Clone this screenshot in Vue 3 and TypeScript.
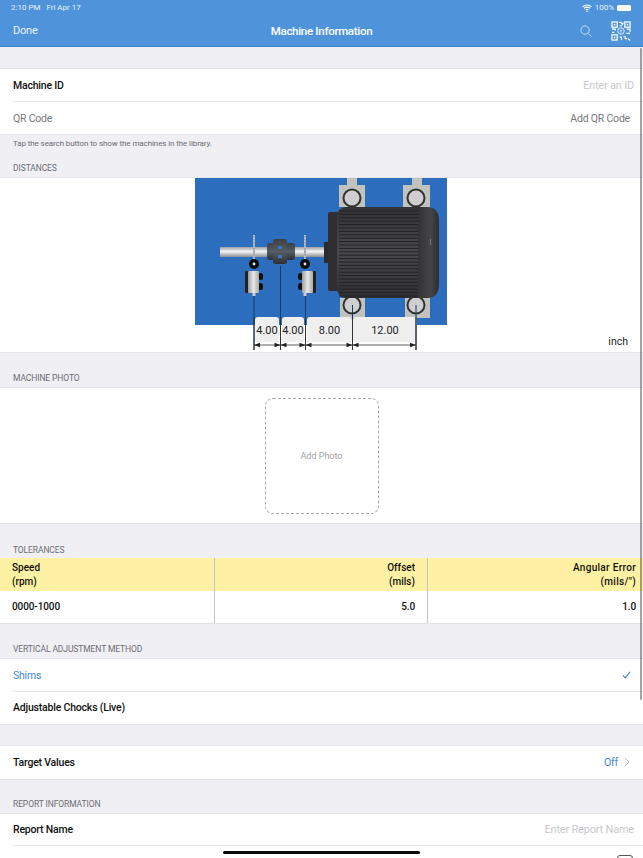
<script setup lang="ts">
const fins: number[] = []
for (let y = 211; y < 296; y += 3.4) fins.push(y)

const dims = [
  { x: 255, w: 24, label: '4.00' },
  { x: 282, w: 22, label: '4.00' },
  { x: 307, w: 45, label: '8.00' },
  { x: 353, w: 64, label: '12.00' },
]
const arrows = [
  [254, 280.5],
  [280.5, 305.5],
  [305.5, 352.5],
  [352.5, 416],
]
</script>

<template>
  <div class="screen">
    <header class="nav">
      <div class="status">
        <span>2:10 PM&nbsp;&nbsp; Fri Apr 17</span>
        <span class="status-right">
          <svg width="10" height="8" viewBox="0 0 10 8">
            <path d="M0.5 2.8a6.4 6.4 0 0 1 9 0M2 4.4a4.2 4.2 0 0 1 6 0M3.5 5.9a2 2 0 0 1 3 0" fill="none" stroke="#fff" stroke-width="1.1" />
            <circle cx="5" cy="7.1" r="0.8" fill="#fff" />
          </svg>
          <span>100%</span>
          <i class="battery"></i>
        </span>
      </div>
      <div class="bar">
        <span class="done">Done</span>
        <span class="title">Machine Information</span>
        <span class="actions">
          <svg width="12" height="12" viewBox="0 0 13 13">
            <circle cx="5.5" cy="5.5" r="4.5" fill="none" stroke="#dbe9f8" stroke-width="0.9" />
            <path d="M8.8 8.9l3.6 3.6" stroke="#dbe9f8" stroke-width="0.9" fill="none" />
          </svg>
          <svg width="20" height="20" viewBox="0 0 21 21" fill="none" stroke="#fff">
            <rect x="1" y="1" width="5.5" height="5.5" stroke-width="1.3" />
            <rect x="14.5" y="1" width="5.5" height="5.5" stroke-width="1.3" />
            <rect x="1" y="14.5" width="5.5" height="5.5" stroke-width="1.3" />
            <rect x="3" y="3" width="1.6" height="1.6" fill="#fff" stroke="none" />
            <rect x="16.5" y="3" width="1.6" height="1.6" fill="#fff" stroke="none" />
            <rect x="3" y="16.5" width="1.6" height="1.6" fill="#fff" stroke="none" />
            <path d="M8.5 1.5h1.8l1.6 2 1-2M9 5h2.5M1 8.5h3.5v1.5M1 12h2.5M16.5 8.5h3.5v3M16 13h4M9 17h2v3M13 16.5h2v2h2M18 18.5l2 2" stroke-width="1.2" />
            <circle cx="10.5" cy="10.5" r="3.4" stroke-width="0.9" />
            <path d="M9.3 9.3l1.2 1.4 1.2-1.4M10.5 10.7v1.7" stroke-width="0.8" />
          </svg>
        </span>
      </div>
    </header>

    <div class="g21"></div>
    <section class="group">
      <div class="row inset">
        <span class="label">Machine ID</span>
        <span class="placeholder">Enter an ID</span>
      </div>
      <div class="row qr">
        <span class="label muted">QR Code</span>
        <span class="value-muted pad-end">Add QR Code</span>
      </div>
    </section>
    <p class="hint">Tap the search button to show the machines in the library.</p>
    <h2 class="caption first">DISTANCES</h2>

    <section class="group diagram">
      <svg class="machine" width="252" height="174" viewBox="195 178 252 174">
        <defs>
          <linearGradient id="shaft" x1="0" x2="0" y1="0" y2="1">
            <stop offset="0" stop-color="#9a9fa3" />
            <stop offset="0.45" stop-color="#f4f4f4" />
            <stop offset="1" stop-color="#8b9195" />
          </linearGradient>
          <linearGradient id="block" x1="0" x2="1" y1="0" y2="0">
            <stop offset="0" stop-color="#9c9c9c" />
            <stop offset="0.5" stop-color="#e8e8e8" />
            <stop offset="1" stop-color="#a8a8a8" />
          </linearGradient>
          <linearGradient id="body" x1="0" x2="0" y1="0" y2="1">
            <stop offset="0" stop-color="#333335" />
            <stop offset="0.5" stop-color="#4a4a4c" />
            <stop offset="1" stop-color="#2f2f31" />
          </linearGradient>
          <linearGradient id="endcap" x1="0" x2="1" y1="0" y2="0">
            <stop offset="0" stop-color="#333335" />
            <stop offset="0.6" stop-color="#454547" />
            <stop offset="1" stop-color="#2e2e30" />
          </linearGradient>
          <linearGradient id="coupling" x1="0" x2="0" y1="0" y2="1">
            <stop offset="0" stop-color="#3b4046" />
            <stop offset="0.5" stop-color="#575d64" />
            <stop offset="1" stop-color="#2c3036" />
          </linearGradient>
        </defs>

        <rect x="195" y="178" width="252" height="147" fill="#2c6ebd" />

        <g fill="#c2c2bf">
          <rect x="347" y="178" width="10" height="8" />
          <rect x="412" y="178" width="10" height="8" />
          <rect x="339" y="185" width="26" height="22" />
          <rect x="403" y="185" width="27" height="22" />
          <rect x="340" y="298" width="25" height="20" />
          <rect x="405" y="298" width="25" height="20" />
        </g>
        <g fill="#cfcfcf" stroke="#333" stroke-width="2">
          <circle cx="352" cy="198" r="8.5" />
          <circle cx="416" cy="198" r="8.5" />
          <circle cx="352" cy="305" r="8.5" />
          <circle cx="416" cy="305" r="8.5" />
        </g>

        <rect x="220" y="247" width="105" height="10" fill="url(#shaft)" />
        <rect x="324" y="242" width="5" height="21" fill="#2b2b2d" />
        <rect x="328" y="212" width="12" height="79" rx="2" fill="#2f2f31" />
        <rect x="337" y="207" width="90" height="91" rx="9" fill="url(#body)" />
        <path d="M418 207H427q12 0 12 14V284q0 14-12 14H418z" fill="url(#endcap)" />
        <path v-for="y in fins" :key="y" :d="`M339 ${y}H418`" stroke="#222224" stroke-width="1" />
        <rect x="430" y="239" width="1" height="6" fill="#77777a" />

        <rect x="267" y="243" width="28" height="17" rx="3" fill="url(#coupling)" />
        <rect x="273" y="239" width="14" height="25" rx="2" fill="url(#coupling)" />
        <rect x="278" y="246" width="4" height="3" fill="#3a78c4" />
        <rect x="278" y="255" width="4" height="3" fill="#3a78c4" />

        <g>
          <path d="M254 235V259M305 235V259" stroke="#b7bdc2" stroke-width="2" />
          <path d="M254 236V258M305 236V258" stroke="#7f8a92" stroke-width="1" stroke-dasharray="1.5 1.5" />
          <circle cx="254" cy="264" r="5" fill="#0d0d0d" />
          <circle cx="305" cy="264" r="5" fill="#0d0d0d" />
          <circle cx="254" cy="264" r="1.4" fill="#e6e6e6" />
          <circle cx="305" cy="264" r="1.4" fill="#e6e6e6" />

          <rect x="258" y="273" width="5" height="7" rx="2.5" fill="#111" />
          <rect x="258" y="283" width="5" height="7" rx="2.5" fill="#111" />
          <rect x="245" y="271" width="4" height="22" rx="1" fill="#222" />
          <rect x="248" y="271" width="11" height="22" rx="1" fill="url(#block)" />
          <rect x="252.5" y="293" width="3" height="3" fill="#ccc" />

          <rect x="298" y="273" width="5" height="7" rx="2.5" fill="#111" />
          <rect x="298" y="283" width="5" height="7" rx="2.5" fill="#111" />
          <rect x="312" y="271" width="4" height="22" rx="1" fill="#222" />
          <rect x="302" y="271" width="11" height="22" rx="1" fill="url(#block)" />
          <rect x="303.5" y="293" width="3" height="3" fill="#ccc" />
        </g>

        <g v-for="d in dims" :key="d.x">
          <path :d="`M${d.x + 3} 317H${d.x + d.w - 3}q3 0 3 3V342H${d.x}V320q0-3 3-3z`" fill="#efefef" />
          <text :x="d.x + d.w / 2" y="334" text-anchor="middle" class="dim">{{ d.label }}</text>
        </g>

        <g stroke="#123c66" stroke-width="1" fill="none">
          <path d="M254 296V350M280.5 266V350M305.5 296V350M352.5 305V350M416 305V350" />
        </g>
        <path d="M254 317V350M280.5 317V350M305.5 317V350M352.5 317V350M416 317V350" stroke="#333" stroke-width="1" fill="none" />
        <g v-for="a in arrows" :key="a[0]">
          <path :d="`M${a[0]} 345H${a[1]}`" stroke="#333" stroke-width="0.8" />
          <path :d="`M${a[0]} 345l6-2.2v4.4zM${a[1]} 345l-6-2.2v4.4z`" fill="#222" />
        </g>
      </svg>
      <span class="unit">inch</span>
    </section>

    <h2 class="caption photo-cap">MACHINE PHOTO</h2>
    <section class="group photo">
      <div class="add-photo">Add Photo</div>
    </section>

    <h2 class="caption tol-cap tight">TOLERANCES</h2>
    <section class="group tolerances">
      <div class="cell head">Speed<br />(rpm)</div>
      <div class="cell head num">Offset<br />(mils)</div>
      <div class="cell head num end">Angular Error<br />(mils/″)</div>
      <div class="cell">0000-1000</div>
      <div class="cell num">5.0</div>
      <div class="cell num end">1.0</div>
    </section>

    <h2 class="caption vert-cap">VERTICAL ADJUSTMENT METHOD</h2>
    <section class="group">
      <div class="row inset">
        <span class="label blue">Shims</span>
        <svg class="check" width="9" height="8" viewBox="0 0 10 9">
          <path d="M1 5l2.6 2.8L9 1" fill="none" stroke="#3f86cf" stroke-width="1.2" />
        </svg>
      </div>
      <div class="row">
        <span class="label">Adjustable Chocks (Live)</span>
      </div>
    </section>

    <div class="g20"></div>
    <section class="group">
      <div class="row">
        <span class="label">Target Values</span>
        <span class="target">
          <span class="blue">Off</span>
          <svg width="6" height="10" viewBox="0 0 6 10">
            <path d="M1 1l4 4-4 4" fill="none" stroke="#b4b4b8" stroke-width="1" />
          </svg>
        </span>
      </div>
    </section>

    <h2 class="caption report-cap">REPORT INFORMATION</h2>
    <section class="group">
      <div class="row inset">
        <span class="label">Report Name</span>
        <span class="placeholder">Enter Report Name</span>
      </div>
      <div class="row next">
        <i class="box"></i>
      </div>
    </section>

    <i class="scrollbar"></i>
    <i class="home"></i>
  </div>
</template>

<style>
html,
body {
  margin: 0;
  background: #efeff4;
}
</style>

<style scoped>
.screen {
  position: relative;
  width: 643px;
  height: 858px;
  overflow: hidden;
  background: #efeff4;
  font-family: Roboto, "Liberation Sans", sans-serif;
  font-size: 11px;
  color: #111;
}
.nav {
  height: 46px;
  background: #4f94db;
  color: #fff;
  border-bottom: 1px solid #3e7fc4;
}
.status {
  display: flex;
  justify-content: space-between;
  align-items: center;
  height: 15px;
  padding: 0 12px 0 11px;
  font-size: 8px;
  color: #e8f1fb;
}
.status-right {
  display: flex;
  align-items: center;
  gap: 3px;
}
.battery {
  display: block;
  width: 14px;
  height: 6px;
  background: #fff;
  border-radius: 1.5px;
}
.bar {
  position: relative;
  display: flex;
  justify-content: space-between;
  align-items: center;
  height: 31px;
  padding: 0 12px 0 13px;
}
.done {
  font-size: 11px;
  letter-spacing: -0.2px;
  color: #eaf3fc;
}
.title {
  position: absolute;
  left: 0;
  right: 0;
  text-align: center;
  font-size: 11.5px;
  font-weight: 500;
  letter-spacing: -0.3px;
}
.actions {
  display: flex;
  align-items: center;
  gap: 19px;
}
.g21 {
  height: 21px;
}
.g20 {
  height: 20px;
}
.group {
  background: #fff;
  border-top: 1px solid #e4e4e8;
  border-bottom: 1px solid #e4e4e8;
}
.row {
  position: relative;
  display: flex;
  justify-content: space-between;
  align-items: center;
  height: 32.5px;
  padding: 0 9px 0 13px;
}
.qr {
  height: 31.5px;
  padding-top: 1px;
}
.inset::after {
  content: "";
  position: absolute;
  left: 12px;
  right: 0;
  bottom: 0;
  height: 1px;
  background: #e8e8ea;
}
.label {
  font-size: 10.5px;
  letter-spacing: -0.2px;
  font-weight: 500;
  color: #111;
}
.muted {
  font-weight: 400;
  color: #77777c;
}
.blue {
  font-weight: 400;
  color: #3f86cf;
}
.placeholder {
  font-size: 11px;
  letter-spacing: -0.2px;
  color: #c9c9cd;
}
.value-muted {
  font-size: 10.5px;
  letter-spacing: -0.2px;
  color: #77777c;
}
.pad-end {
  padding-right: 4px;
}
.hint {
  margin: 0;
  padding: 3px 13px 0;
  height: 11px;
  line-height: 11px;
  font-size: 8px;
  letter-spacing: -0.1px;
  color: #6e6e73;
}
.caption {
  margin: 0;
  padding: 0 13px;
  height: 11px;
  line-height: 11px;
  font-size: 8.5px;
  letter-spacing: -0.1px;
  font-weight: 400;
  color: #6e6e73;
}
.first {
  padding-top: 14px;
  padding-bottom: 3px;
}
.photo-cap {
  padding-top: 20px;
  padding-bottom: 3px;
}
.tol-cap {
  padding-top: 21px;
  padding-bottom: 3px;
}
.tight {
  padding-bottom: 2px;
}
.vert-cap {
  padding-top: 20px;
  padding-bottom: 3px;
}
.report-cap {
  padding-top: 19px;
  padding-bottom: 3px;
}
.diagram {
  position: relative;
  display: flex;
  justify-content: center;
  height: 174px;
  padding-right: 1px;
}
.machine {
  display: block;
}
.dim {
  font-family: Roboto, "Liberation Sans", sans-serif;
  font-size: 11px;
  fill: #222;
}
.unit {
  position: absolute;
  right: 15px;
  bottom: 4px;
  font-size: 10.5px;
  color: #222;
}
.photo {
  display: flex;
  justify-content: center;
  align-items: center;
  height: 135px;
}
.add-photo {
  display: flex;
  justify-content: center;
  align-items: center;
  box-sizing: border-box;
  width: 114px;
  height: 116px;
  border: 1px dashed #a9a9ad;
  border-radius: 8px;
  font-size: 9px;
  color: #a0a0a4;
}
.tolerances {
  display: grid;
  grid-template-columns: 215px 213px 215px;
  grid-template-rows: 33px 32px;
  border-top: 0;
}
.cell {
  display: flex;
  flex-direction: column;
  justify-content: center;
  padding: 0 12px;
  font-size: 10px;
  letter-spacing: -0.1px;
  line-height: 14px;
  font-weight: 500;
  border-right: 1px solid #c5c5c2;
}
.cell:nth-child(3n) {
  border-right: 0;
}
.head {
  display: block;
  padding-top: 3px;
  background: #fef1a3;
  letter-spacing: 0;
}
.num {
  text-align: right;
  align-items: flex-end;
}
.end {
  padding-right: 7px;
}
.head.end {
  letter-spacing: 0.3px;
}
.check {
  margin-right: 3px;
}
.target {
  display: flex;
  align-items: center;
  gap: 6px;
  margin-right: 4px;
  font-size: 10.5px;
  letter-spacing: -0.2px;
}
.next {
  height: 14px;
}
.box {
  position: absolute;
  right: 10px;
  top: 9px;
  width: 14px;
  height: 14px;
  border: 1px solid #555;
  border-radius: 3px;
}
.scrollbar {
  position: absolute;
  right: 1.5px;
  top: 48px;
  width: 2px;
  height: 652px;
  border-radius: 1px;
  background: rgba(90, 90, 95, 0.55);
}
.home {
  position: absolute;
  left: 223px;
  top: 851px;
  width: 197px;
  height: 3px;
  border-radius: 2px;
  background: #0a0a0a;
}
</style>
